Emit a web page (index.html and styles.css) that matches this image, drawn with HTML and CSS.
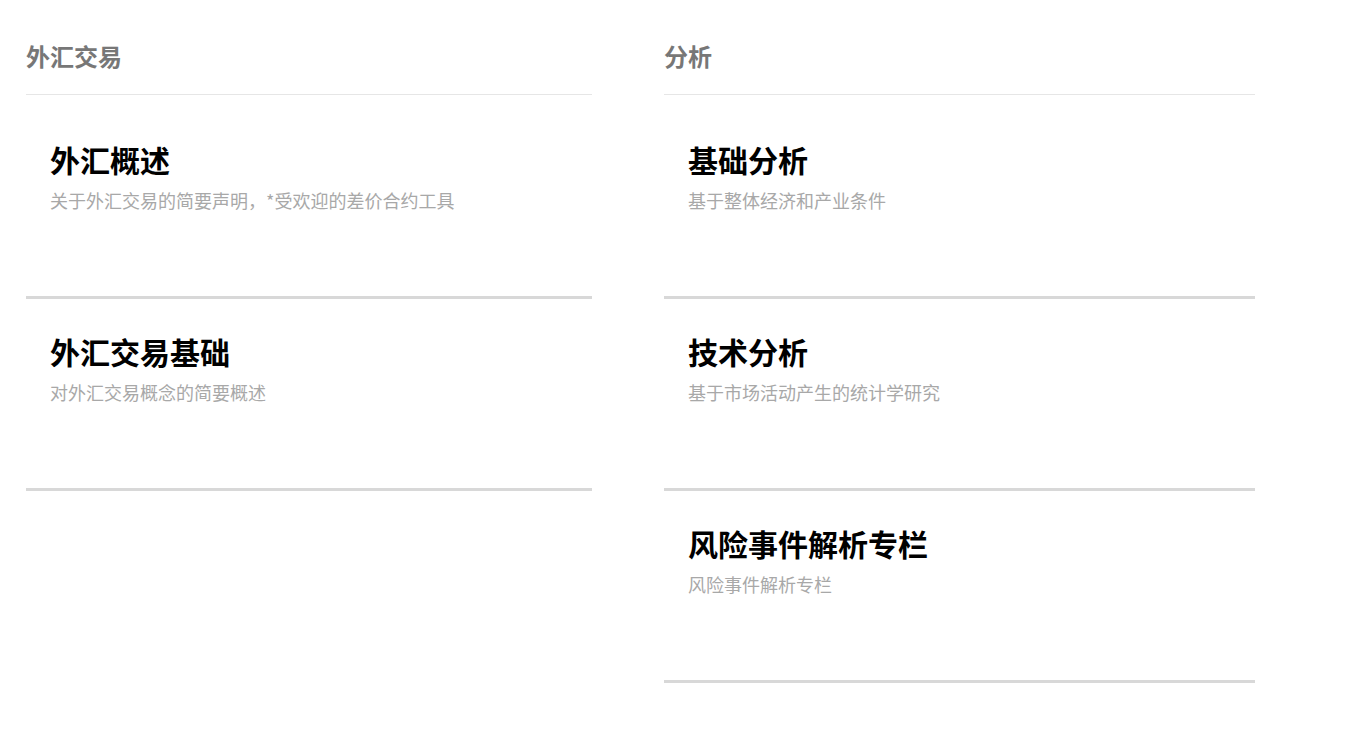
FILE: index.html
```html
<!DOCTYPE html>
<html lang="zh-CN">
<head>
    <meta charset="UTF-8">
    <title>外汇交易</title>
    <link rel="stylesheet" href="styles.css">
</head>
<body>

<div class="sections">
    <div class="section section-left">
        <h2 class="section-title">外汇交易</h2>
        <div class="items">
            <div class="item">
                <h3>外汇概述</h3>
                <p>关于外汇交易的简要声明，*受欢迎的差价合约工具</p>
            </div>
            <div class="item">
                <h3>外汇交易基础</h3>
                <p>对外汇交易概念的简要概述</p>
            </div>
        </div>
    </div>

    <div class="section section-right">
        <h2 class="section-title">分析</h2>
        <div class="items">
            <div class="item">
                <h3>基础分析</h3>
                <p>基于整体经济和产业条件</p>
            </div>
            <div class="item">
                <h3>技术分析</h3>
                <p>基于市场活动产生的统计学研究</p>
            </div>
            <div class="item">
                <h3>风险事件解析专栏</h3>
                <p>风险事件解析专栏</p>
            </div>
        </div>
    </div>
</div>

</body>
</html>
```

FILE: styles.css
```css
body {
    margin: 0;
    font-family: "Noto Sans CJK SC", "Liberation Sans", sans-serif;
    background: #fff;
}
.sections {
    display: flex;
    align-items: flex-start;
    gap: 72px;
    padding: 38px 26px;
}
.section-left {
    width: 566px;
}
.section-right {
    width: 591px;
}
.section-title {
    margin: 0;
    font-size: 24px;
    line-height: 36px;
    font-weight: bold;
    color: #777;
    padding-bottom: 20px;
    border-bottom: 1px solid #e6e6e6;
}
.items {
    margin-top: 12px;
}
.item {
    height: 157px;
    padding: 32px 24px 0;
    border-bottom: 3px solid #d8d8d8;
}
.item h3 {
    margin: 0;
    font-size: 30px;
    line-height: 40px;
    font-weight: bold;
    color: #000;
}
.item p {
    margin: 8px 0 0;
    font-size: 18px;
    line-height: 26px;
    color: #a8a8a8;
}
```
